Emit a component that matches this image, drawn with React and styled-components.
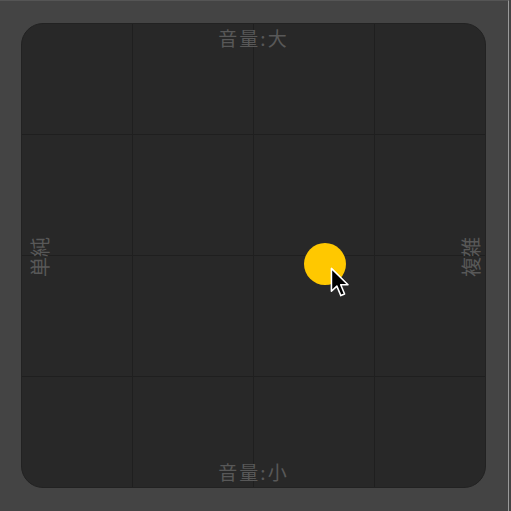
import React from "react";
import styled, { createGlobalStyle } from "styled-components";

const GlobalStyle = createGlobalStyle`
  html, body {
    margin: 0;
    padding: 0;
    background: #444444;
    font-family: "Noto Sans CJK JP", "Noto Sans", sans-serif;
  }
`;

const Frame = styled.div`
  box-sizing: border-box;
  width: 509px;
  height: 511px;
  padding: 22px 21px 0 21px;
  border-top: 1px solid #555555;
  border-right: 1px solid #9a9a9a;
  background: #444444;
`;

const Pad = styled.div`
  position: relative;
  box-sizing: border-box;
  width: 465px;
  height: 465px;
  border-radius: 22px;
  border: 1px solid #222222;
  background-color: #282828;
  background-image:
    linear-gradient(to right, transparent 60px, #1f1f1f 60px, #1f1f1f 61px, transparent 61px),
    linear-gradient(to bottom, transparent 60px, #1f1f1f 60px, #1f1f1f 61px, transparent 61px);
  background-size: 121px 121px;
  background-position: center center;
  display: grid;
  grid-template-columns: 36px 1fr 29px;
  grid-template-rows: 27px 1fr 32px;
  overflow: hidden;
`;

const Label = styled.span`
  color: #585858;
  font-size: 19px;
  line-height: 1;
  letter-spacing: ${(p) => p.$spacing || 0}px;
  display: flex;
  align-items: center;
  justify-content: center;
  white-space: nowrap;
  grid-column: ${(p) => p.$col};
  grid-row: ${(p) => p.$row};
`;

const SideLabel = styled(Label)`
  writing-mode: vertical-rl;
  text-orientation: sideways;
  transform: rotate(180deg);
  font-size: 20px;
  margin-top: 8px;
`;

const Thumb = styled.div`
  position: absolute;
  width: 42px;
  height: 42px;
  transform: translate(-50%, -50%);
`;

const Dot = styled.div`
  width: 42px;
  height: 42px;
  border-radius: 50%;
  background: #ffc800;
`;

const Cursor = styled.svg`
  position: absolute;
  left: 26px;
  top: 24px;
  overflow: visible;
`;

const value = { x: 0.654, y: 0.518 };

export default function App() {
  return (
    <>
      <GlobalStyle />
      <Frame>
        <Pad>
          <Label $col="1 / -1" $row="1" $spacing={2}>音量:大</Label>
          <SideLabel $col="1" $row="2">単純</SideLabel>
          <SideLabel $col="3" $row="2">複雑</SideLabel>
          <Label $col="1 / -1" $row="3" $spacing={2}>音量:小</Label>
          <Thumb style={{ left: `${value.x * 100}%`, top: `${value.y * 100}%` }}>
            <Dot />
            <Cursor width="20" height="30" viewBox="0 0 14 21">
              <path
                d="M1 1 L1 17 L4.8 13.4 L7.6 20 L10.2 18.9 L7.5 12.4 L12.6 12.4 Z"
                fill="#000"
                stroke="#fff"
                strokeWidth="1.1"
                strokeLinejoin="round"
              />
            </Cursor>
          </Thumb>
        </Pad>
      </Frame>
    </>
  );
}
